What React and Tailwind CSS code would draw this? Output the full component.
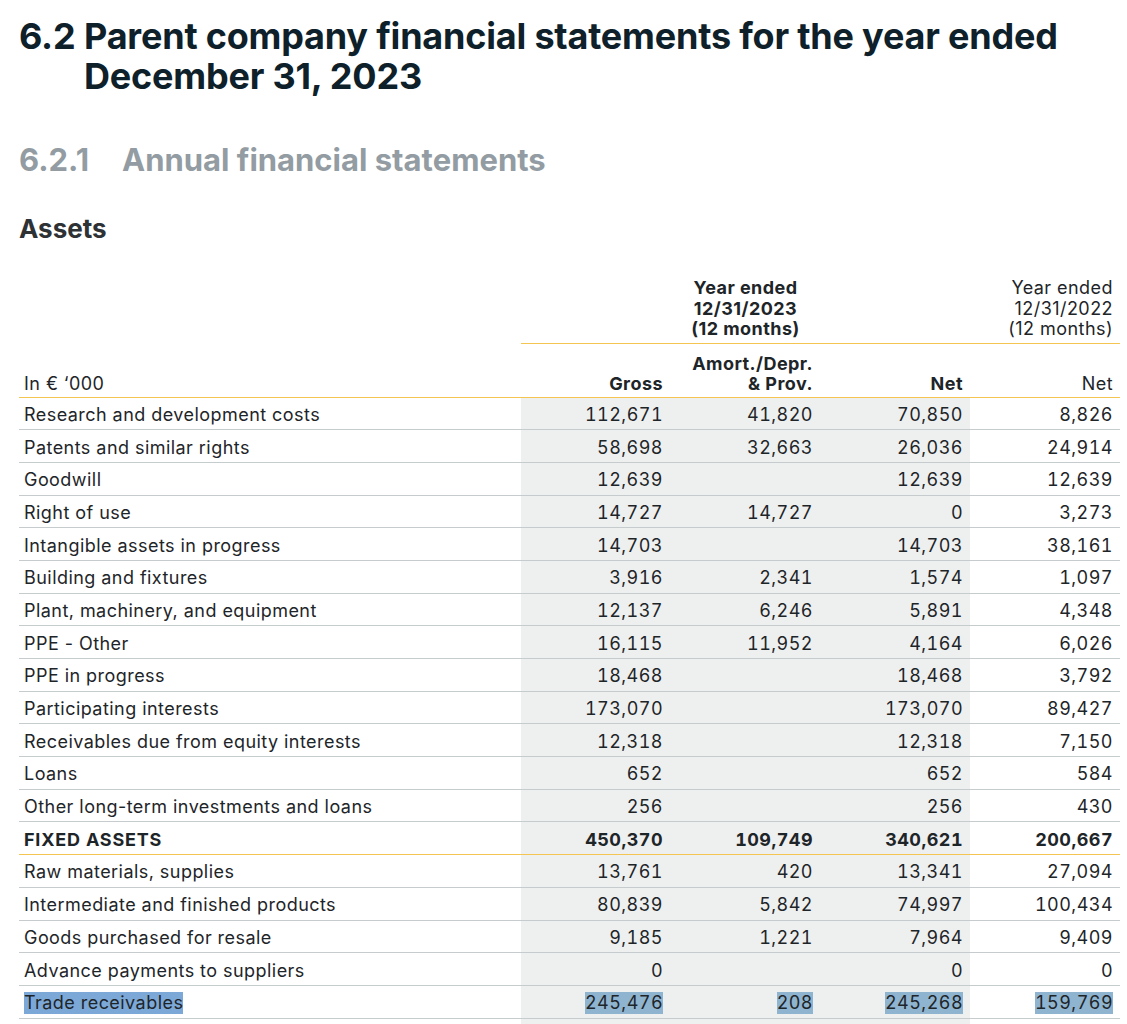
const rows = [
  ["Research and development costs", "112,671", "41,820", "70,850", "8,826"],
  ["Patents and similar rights", "58,698", "32,663", "26,036", "24,914"],
  ["Goodwill", "12,639", "", "12,639", "12,639"],
  ["Right of use", "14,727", "14,727", "0", "3,273"],
  ["Intangible assets in progress", "14,703", "", "14,703", "38,161"],
  ["Building and fixtures", "3,916", "2,341", "1,574", "1,097"],
  ["Plant, machinery, and equipment", "12,137", "6,246", "5,891", "4,348"],
  ["PPE - Other", "16,115", "11,952", "4,164", "6,026"],
  ["PPE in progress", "18,468", "", "18,468", "3,792"],
  ["Participating interests", "173,070", "", "173,070", "89,427"],
  ["Receivables due from equity interests", "12,318", "", "12,318", "7,150"],
  ["Loans", "652", "", "652", "584"],
  ["Other long-term investments and loans", "256", "", "256", "430"],
  ["FIXED ASSETS", "450,370", "109,749", "340,621", "200,667", "total"],
  ["Raw materials, supplies", "13,761", "420", "13,341", "27,094"],
  ["Intermediate and finished products", "80,839", "5,842", "74,997", "100,434"],
  ["Goods purchased for resale", "9,185", "1,221", "7,964", "9,409"],
  ["Advance payments to suppliers", "0", "", "0", "0"],
  ["Trade receivables", "245,476", "208", "245,268", "159,769", "selected"],
];

const cols = "grid grid-cols-[502px_149px_150px_150px_150px]";

function Cell({ children, shaded, bold, selected }) {
  return (
    <div
      className={`flex items-center justify-end pr-[7px] pt-[3px] tabular-nums ${shaded ? "bg-[#eef0ef]" : ""} ${bold ? "font-bold" : ""}`}
    >
      {children && (
        <span className={selected ? "bg-[#8fb4d0]" : ""}>{children}</span>
      )}
    </div>
  );
}

export default function App() {
  return (
    <div className="min-h-screen bg-white px-[19px] pt-[16px] font-['Inter',sans-serif] text-[#1e2529]">
      <h1 className="flex text-[36px] font-bold leading-[40px] text-[#0e2029] tracking-[-0.2px]">
        <span className="w-[65px] shrink-0">6.2</span>
        <span>
          Parent company financial statements for the year ended
          <br />
          December 31, 2023
        </span>
      </h1>

      <h2 className="mt-[46px] flex text-[31px] font-bold leading-[36px] text-[#929ca2]">
        <span className="w-[103px] shrink-0">6.2.1</span>
        <span>Annual financial statements</span>
      </h2>

      <h3 className="mt-[36px] text-[26px] font-bold leading-[30px] text-[#2e3235]">
        Assets
      </h3>

      <div className="mt-[34px] w-[1101px] text-[18px] tracking-[0.45px]">
        <div className={`${cols} leading-[20.5px]`}>
          <div />
          <div className="col-span-3 border-b border-[#f4c550] pb-[3px] text-center font-bold">
            Year ended
            <br />
            12/31/2023
            <br />
            (12 months)
          </div>
          <div className="border-b border-[#f4c550] pb-[3px] pr-[7px] text-right">
            Year ended
            <br />
            12/31/2022
            <br />
            (12 months)
          </div>
        </div>
        <div className={`${cols} border-b border-[#f4c550] pb-[3px] pt-[10px] leading-[20px]`}>
          <div className="flex items-end pl-[5px]">In € ‘000</div>
          <div className="flex items-end justify-end pr-[7px] font-bold">Gross</div>
          <div className="flex items-end justify-end pr-[7px] text-right font-bold">
            Amort./Depr.
            <br />
            &amp; Prov.
          </div>
          <div className="flex items-end justify-end pr-[7px] font-bold">Net</div>
          <div className="flex items-end justify-end pr-[7px]">Net</div>
        </div>

        {rows.map((r) => {
          const total = r[5] === "total";
          const selected = r[5] === "selected";
          return (
            <div
              key={r[0]}
              className={`${cols} h-[32.7px] border-b leading-[22px] ${total ? "border-[#f4c550]" : "border-[#c6cbce]"}`}
            >
              <div className={`flex items-center pl-[5px] pt-[3px] ${total ? "font-bold tracking-[0.8px]" : ""}`}>
                <span className={selected ? "bg-[#7ca8d8]" : ""}>{r[0]}</span>
              </div>
              <Cell shaded bold={total} selected={selected}>{r[1]}</Cell>
              <Cell shaded bold={total} selected={selected}>{r[2]}</Cell>
              <Cell shaded bold={total} selected={selected}>{r[3]}</Cell>
              <Cell bold={total} selected={selected}>{r[4]}</Cell>
            </div>
          );
        })}
        <div className={`${cols} h-[10px]`}>
          <div />
          <div className="col-span-3 bg-[#eef0ef]" />
        </div>
      </div>
    </div>
  );
}
